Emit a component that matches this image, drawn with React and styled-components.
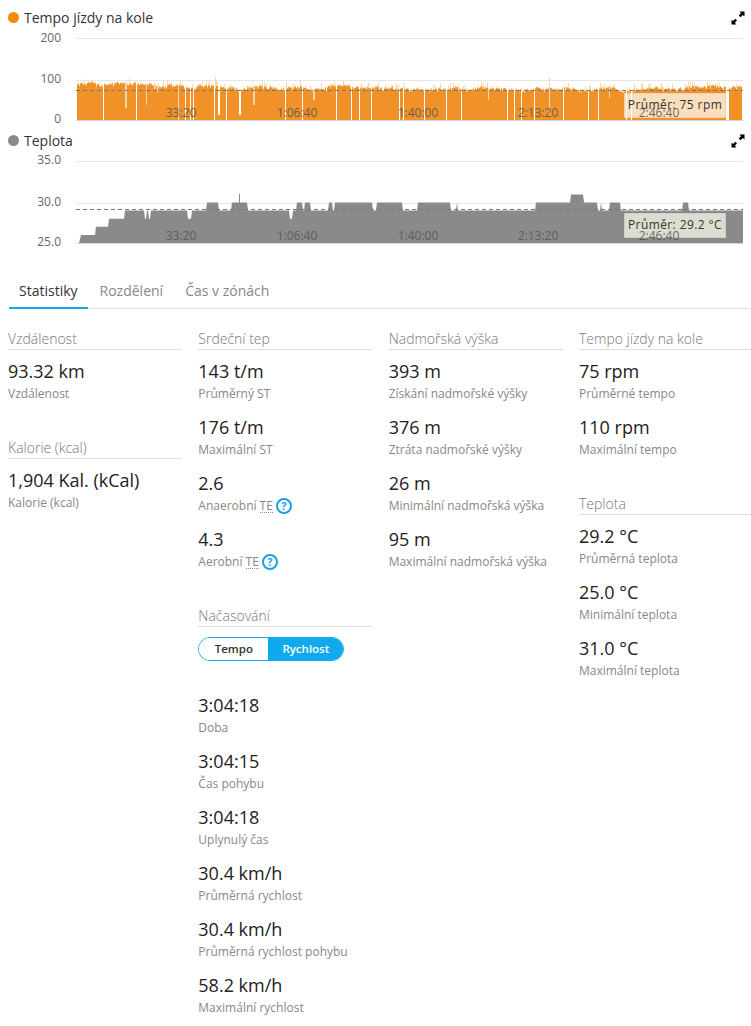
import React from "react"
import styled, { createGlobalStyle } from "styled-components"

const GlobalStyle = createGlobalStyle`
  html, body {
    margin: 0;
    padding: 0;
    background: #fff;
    overflow: hidden;
  }
  body {
    font-family: "Open Sans", "Liberation Sans", sans-serif;
    color: #222;
  }
`

const Page = styled.div`
  width: 751px;
  height: 1026px;
  overflow: hidden;
`

const ChartBlock = styled.section`
  height: 123px;
`

const ChartHeader = styled.header`
  display: flex;
  align-items: center;
  height: 35px;
  margin-bottom: -5px;
  padding: 0 6px 0 8px;
`

const Dot = styled.span`
  width: 11px;
  height: 11px;
  border-radius: 50%;
  background: ${(p) => p.$color};
  margin-right: 5px;
`

const ChartTitle = styled.h3`
  flex: 1;
  margin: 0;
  font-size: 14px;
  font-weight: 400;
  color: #333;
`

const ChartSvg = styled.svg`
  display: block;
  overflow: visible;
  text {
    font-family: "Open Sans", "Liberation Sans", sans-serif;
    font-size: 12px;
  }
`

const TabRow = styled.nav`
  display: flex;
  gap: 2px;
  height: 35px;
  margin: 28px 0 0 9px;
  box-sizing: border-box;
  border-bottom: 1px solid #ddd;
`

const Tab = styled.a`
  height: 35px;
  padding: 0 10px;
  box-sizing: border-box;
  font-size: 14px;
  line-height: 34px;
  color: ${(p) => (p.$active ? "#333" : "#888")};
  border-bottom: 2px solid ${(p) => (p.$active ? "#11a9ed" : "transparent")};
`

const Columns = styled.div`
  display: grid;
  grid-template-columns: repeat(4, 174px);
  column-gap: 16.33px;
  margin-top: 21px;
  padding-left: 8px;
`

const Section = styled.section`
  margin-bottom: 35px;
`

const SectionHead = styled.h4`
  margin: 0 0 10px;
  height: 19px;
  font-size: 14px;
  font-weight: 300;
  line-height: 17px;
  color: #777;
  border-bottom: 1px solid #ddd;
  white-space: nowrap;
`

const Stat = styled.div`
  margin-bottom: 12px;
`

const Value = styled.div`
  margin-bottom: 2px;
  font-size: 18px;
  line-height: 22px;
  color: #222;
  white-space: nowrap;
`

const Label = styled.div`
  display: flex;
  align-items: center;
  font-size: 12px;
  line-height: 20px;
  color: #888;
  white-space: nowrap;
`

const Abbr = styled.span`
  margin-left: 3px;
  border-bottom: 1px dotted #888;
  line-height: 13px;
`

const Help = styled.span`
  width: 16px;
  height: 16px;
  margin-left: 3px;
  box-sizing: border-box;
  border: 2px solid #1aa0e4;
  border-radius: 50%;
  font-size: 11px;
  font-weight: 700;
  line-height: 12px;
  text-align: center;
  color: #1aa0e4;
`

const Toggle = styled.div`
  display: flex;
  width: 146px;
  height: 24px;
  margin: 2px 0 33px;
  box-sizing: border-box;
  border: 1px solid #11a9ed;
  border-radius: 12px;
  overflow: hidden;
`

const ToggleOption = styled.div`
  width: ${(p) => p.$width}px;
  font-size: 11.5px;
  font-weight: 600;
  line-height: 22px;
  text-align: center;
  color: ${(p) => (p.$active ? "#fff" : "#333")};
  background: ${(p) => (p.$active ? "#11a9ed" : "#fff")};
`

// svg sits 30px below the top of its block, plot runs from x 76 to 743
const PLOT_LEFT = 76
const PLOT_RIGHT = 743
const TICKS = [
  ["33:20", 181],
  ["1:06:40", 297],
  ["1:40:00", 418],
  ["2:13:20", 538],
  ["2:46:40", 659],
]

const ExpandIcon = () => (
  <svg width="14" height="14" viewBox="0 0 14 14">
    <path d="M8.500 0.500H13.500V5.500L11.800 4 9.500 6.300 7.700 4.500 10 2.200z" fill="#000" />
    <path d="M0.500 13.500V8.500L2 10 4.300 7.700 6 9.400 3.800 11.800 5.500 13.500z" fill="#000" />
  </svg>
)

const ChartFrame = ({ grid, bottom, avg, note, noteTop, noteFill, children }) => (
  <ChartSvg width="751" height="93" viewBox="0 0 751 93">
    {grid.map(([label, y, labelY]) => (
      <g key={label}>
        <line x1={PLOT_LEFT} x2={PLOT_RIGHT} y1={y + 0.5} y2={y + 0.5} stroke="#e6e6e6" />
        <text x="61" y={labelY + 4} textAnchor="end" fill="#666">
          {label}
        </text>
      </g>
    ))}
    {children}
    <line x1={PLOT_LEFT} x2={PLOT_RIGHT} y1={bottom + 0.5} y2={bottom + 0.5} stroke="#ccd6eb" />
    <line
      x1={PLOT_LEFT}
      x2={PLOT_RIGHT}
      y1={avg + 0.5}
      y2={avg + 0.5}
      stroke="#777"
      strokeDasharray="4 3"
    />
    <rect x="624.500" y={noteTop + 0.5} width="101" height="24" fill={noteFill} stroke="#fff" strokeOpacity="0.35" />
    {TICKS.map(([label, x]) => (
      <text key={label} x={x} y={bottom - 3} textAnchor="middle" fill="#555" opacity="0.85">
        {label}
      </text>
    ))}
    <text x="675" y={noteTop + 16} textAnchor="middle" fill="#333" letterSpacing="0.4">
      {note}
    </text>
  </ChartSvg>
)

// [x, top of the gap in svg y] gaps in the cadence area
const CADENCE_DIPS = [
  [103, 90], [125, 78], [126, 78], [136, 90], [146, 75], [157, 62], [178, 90], [185, 90],
  [190, 90], [193, 90], [214, 90], [218, 85], [219, 85], [226, 90], [239, 85], [240, 85],
  [253, 75], [254, 75], [285, 90], [302, 90], [313, 70], [314, 70], [336, 90], [351, 90],
  [359, 90], [371, 90], [399, 90], [403, 90], [424, 90], [446, 90], [461, 90], [488, 70],
  [507, 90], [514, 90], [521, 90], [534, 90], [549, 85], [563, 90], [588, 90],
  [598, 90], [609, 68], [626, 90], [631, 90], [726, 90], [727, 90], [728, 90],
]
const CADENCE_SPIKES = { 215: 47, 216: 50, 286: 52, 343: 50, 549: 48, 688: 51, 178: 54, 192: 54 }

const cadencePaths = () => {
  let seed = 17
  const rand = () => {
    seed = (seed * 16807) % 2147483647
    return seed / 2147483647
  }
  const dips = Object.fromEntries(CADENCE_DIPS)
  let solid = `M77 90`
  let light = `M77 90`
  let walk = 56
  for (let x = 77; x < 742; x++) {
    let mean = x < 200 ? 55.5 : x < 400 ? 57 : 58
    if (x > 609 && x < 625) mean = 62
    walk += (rand() - 0.5) * 2.2 + (mean - walk) * 0.12
    const top = walk + (rand() > 0.8 ? 2 : 0)
    const solidTop = dips[x] !== undefined ? dips[x] : top
    const pale = top - rand() * 2 - (rand() > 0.9 ? 4 : 0)
    const lightTop = CADENCE_SPIKES[x] !== undefined ? CADENCE_SPIKES[x] : dips[x] >= 85 ? 90 : pale
    solid += `L${x} ${solidTop.toFixed(1)}L${x + 1} ${solidTop.toFixed(1)}`
    light += `L${x} ${lightTop.toFixed(1)}L${x + 1} ${lightTop.toFixed(1)}`
  }
  return [solid + "L742 90Z", light + "L742 90Z"]
}

// [x where the level starts, level in degrees]
const TEMP_STEPS = [
  [80, 26], [95, 27], [108, 28], [124, 29], [144, 28], [146, 29], [148, 28], [150, 29],
  [187, 28], [191, 29], [206, 30], [218, 29], [231, 30], [247, 29], [289, 28], [292, 29],
  [296, 30], [302, 29], [304, 30], [310, 29], [328, 30], [332, 29], [334, 30], [372, 29],
  [376, 30], [402, 29], [417, 30], [450, 29], [456, 30], [457, 29], [535, 30], [570, 31],
  [583, 30], [597, 29], [600, 30], [601, 29], [609, 30], [620, 29], [682, 30], [688, 29],
]

const tempPath = () => {
  const yOf = (deg) => 90 - (deg - 25) * 8.1
  let d = "M79 90"
  TEMP_STEPS.forEach(([x, deg], i) => {
    const end = i + 1 < TEMP_STEPS.length ? TEMP_STEPS[i + 1][0] : 743
    d += `L${x + 1} ${yOf(deg).toFixed(1)}L${end} ${yOf(deg).toFixed(1)}`
  })
  return d + "L743 90Z"
}

const CadenceChart = () => {
  const [solid, light] = cadencePaths()
  return (
    <ChartFrame
      grid={[["200", 8, 8], ["100", 50, 49], ["0", 90, 89]]}
      bottom={90}
      avg={60}
      note="Průměr: 75 rpm"
      noteTop={63}
      noteFill="rgba(255, 255, 255, 0.7)"
    >
      <path d={light} fill="#f9d5ab" />
      <path d={solid} fill="#f09228" />
    </ChartFrame>
  )
}

const TemperatureChart = () => (
  <ChartFrame
    grid={[["35.0", 8, 7], ["30.0", 50, 49], ["25.0", 90, 89]]}
    bottom={90}
    avg={56}
    note="Průměr: 29.2 °C"
    noteTop={60}
    noteFill="rgba(255, 255, 238, 0.7)"
  >
    <path d={tempPath()} fill="#8a8a8a" />
    <line x1="239.500" x2="239.500" y1="41" y2="50" stroke="#8a8a8a" />
  </ChartFrame>
)

const columns = [
  [
    { head: "Vzdálenost", stats: [["93.32 km", "Vzdálenost"]] },
    { head: "Kalorie (kcal)", stats: [["1,904 Kal. (kCal)", "Kalorie (kcal)"]] },
  ],
  [
    {
      head: "Srdeční tep",
      stats: [
        ["143 t/m", "Průměrný ST"],
        ["176 t/m", "Maximální ST"],
        ["2.6", "Anaerobní", true],
        ["4.3", "Aerobní", true],
      ],
    },
    {
      head: "Načasování",
      toggle: true,
      stats: [
        ["3:04:18", "Doba"],
        ["3:04:15", "Čas pohybu"],
        ["3:04:18", "Uplynulý čas"],
        ["30.4 km/h", "Průměrná rychlost"],
        ["30.4 km/h", "Průměrná rychlost pohybu"],
        ["58.2 km/h", "Maximální rychlost"],
      ],
    },
  ],
  [
    {
      head: "Nadmořská výška",
      stats: [
        ["393 m", "Získání nadmořské výšky"],
        ["376 m", "Ztráta nadmořské výšky"],
        ["26 m", "Minimální nadmořská výška"],
        ["95 m", "Maximální nadmořská výška"],
      ],
    },
  ],
  [
    {
      head: "Tempo jízdy na kole",
      stats: [
        ["75 rpm", "Průměrné tempo"],
        ["110 rpm", "Maximální tempo"],
      ],
    },
    {
      head: "Teplota",
      stats: [
        ["29.2 °C", "Průměrná teplota"],
        ["25.0 °C", "Minimální teplota"],
        ["31.0 °C", "Maximální teplota"],
      ],
    },
  ],
]

const App = () => {
  return (
    <Page>
      <GlobalStyle />
      <ChartBlock>
        <ChartHeader>
          <Dot $color="#f58a07" />
          <ChartTitle>Tempo jízdy na kole</ChartTitle>
          <ExpandIcon />
        </ChartHeader>
        <CadenceChart />
      </ChartBlock>
      <ChartBlock>
        <ChartHeader>
          <Dot $color="#8a8a8a" />
          <ChartTitle>Teplota</ChartTitle>
          <ExpandIcon />
        </ChartHeader>
        <TemperatureChart />
      </ChartBlock>
      <TabRow>
        <Tab $active>Statistiky</Tab>
        <Tab>Rozdělení</Tab>
        <Tab>Čas v zónách</Tab>
      </TabRow>
      <Columns>
        {columns.map((sections, index) => (
          <div key={index}>
            {sections.map((section) => (
              <Section key={section.head}>
                <SectionHead>{section.head}</SectionHead>
                {section.toggle && (
                  <Toggle>
                    <ToggleOption $width={69}>Tempo</ToggleOption>
                    <ToggleOption $width={75} $active>
                      Rychlost
                    </ToggleOption>
                  </Toggle>
                )}
                {section.stats.map(([value, label, te]) => (
                  <Stat key={label}>
                    <Value>{value}</Value>
                    <Label>
                      {label}
                      {te && (
                        <>
                          <Abbr>TE</Abbr>
                          <Help>?</Help>
                        </>
                      )}
                    </Label>
                  </Stat>
                ))}
              </Section>
            ))}
          </div>
        ))}
      </Columns>
    </Page>
  )
}

export default App
